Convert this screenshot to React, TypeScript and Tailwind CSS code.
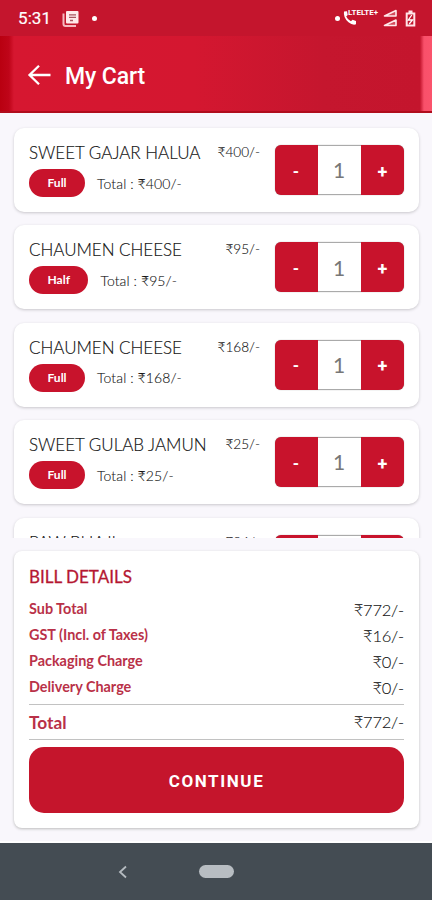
import React from "react";

type Item = { name: string; size: string; price: string };

const items: Item[] = [
  { name: "SWEET GAJAR HALUA", size: "Full", price: "₹400/-" },
  { name: "CHAUMEN CHEESE", size: "Half", price: "₹95/-" },
  { name: "CHAUMEN CHEESE", size: "Full", price: "₹168/-" },
  { name: "SWEET GULAB JAMUN", size: "Full", price: "₹25/-" },
  { name: "PAW BHAJI", size: "Full", price: "₹84/-" },
];

const charges = [
  ["Sub Total", "₹772/-"],
  ["GST (Incl. of Taxes)", "₹16/-"],
  ["Packaging Charge", "₹0/-"],
  ["Delivery Charge", "₹0/-"],
];

function StatusBar() {
  return (
    <div className="flex h-9 items-center bg-[#c4152d] pl-[18px] pr-[16px] text-white">
      <span className="font-[Roboto] text-[17px] leading-none tracking-[0.1px] [-webkit-text-stroke:0.2px_white]">5:31</span>
      <svg className="ml-[11px] mt-px" width="18" height="18" viewBox="0 0 18 18">
        <path d="M5 1h10.500A1 1 0 0 1 16.500 2v10.500a1 1 0 0 1-1 1H5a1 1 0 0 1-1-1V2a1 1 0 0 1 1-1Z" fill="#ffe9ea" />
        <path d="M1.500 3.500V14a2 2 0 0 0 2 2H14" fill="none" stroke="#f5b9c0" strokeWidth="2" />
        <path d="M7 4.800h7M7 7.300h7M8 10.500h3" stroke="#a95560" strokeWidth="1.300" />
      </svg>
      <span className="ml-[12px] size-[5px] rounded-full bg-white" />
      <span className="ml-auto size-[5px] rounded-full bg-white" />
      <svg className="ml-[3px]" width="14" height="16" viewBox="0 0 14 16">
        <path d="M1 1.500 4 1.200 4.700 5 3.200 6.600Q4.800 10 7.900 11.300L9.600 9.700 13 11V14.300Q9.500 15.500 5.500 12.300 0 7.500 1 1.500Z" fill="white" />
      </svg>
      <span className="-ml-[9px] mb-[10px] w-[31px] whitespace-nowrap font-[Roboto] text-[8px] font-bold leading-none">LTELTE+</span>
      <svg className="ml-[4px]" width="15" height="18" viewBox="0 0 15 18">
        <path d="M13 1.500v5.500H1.500ZM13 11v5.500H1.500Z" fill="#d64a5c" stroke="#ffe9eb" strokeWidth="1.600" strokeLinejoin="round" />
      </svg>
      <svg className="ml-[7px]" width="11" height="17" viewBox="0 0 11 17">
        <path d="M3.500 1.500h4M1.700 3.500h7.600v12H1.700Z" fill="none" stroke="#ffe4e7" strokeWidth="2" />
        <path d="m6.800 5-3.500 5h4.200l-3.300 4" fill="none" stroke="white" strokeWidth="1.300" />
      </svg>
    </div>
  );
}

function Header() {
  return (
    <header className="flex h-[77px] items-center border-b-2 border-[#b00d1d] bg-[linear-gradient(90deg,#b90010_0px,#bf0519_9px,#d61730_14px,#d41730_45%,#c5162e_75%,#c4152d_420px,#f9506a_424px,#fb536c_100%)] pl-[27px] pt-[2px] text-white">
      <svg width="25" height="24" viewBox="0 0 25 24" fill="none" stroke="white" strokeWidth="2.300">
        <path d="M23.500 12H2.500M12 2.700 2.500 12l9.500 9.300" />
      </svg>
      <h1 className="ml-[13px] pt-[3px] font-[Roboto] text-[23px] font-medium leading-none tracking-[-0.1px]">My Cart</h1>
    </header>
  );
}

function Stepper() {
  return (
    <div className="mt-[17px] flex h-[50px] w-[129px] shrink-0 overflow-hidden rounded-[6px] bg-[#c8132c] font-[Roboto] shadow-[0_0_1px_#888]">
      <button className="flex w-[43px] items-center justify-center pr-px pt-[3px] text-[16px] font-bold text-white">-</button>
      <span className="flex w-[43px] items-center justify-center border-y border-[#aaa] bg-white pr-px font-[Lato] text-[21px] text-[#777]">1</span>
      <button className="flex w-[43px] items-center justify-center pt-[2px] text-[18px] font-bold text-white">+</button>
    </div>
  );
}

function CartCard({ item }: { item: Item }) {
  return (
    <article className="mb-[13.400px] flex h-[84px] shrink-0 rounded-[10px] bg-white px-[15px] shadow-[0_1px_3px_#c8c6cb]">
      <div className="w-[231px] shrink-0 pt-[13px]">
        <div className="flex h-[24px] justify-between whitespace-nowrap">
          <h2 className="font-[Lato] text-[17px] font-light leading-[24px] text-[#111] tracking-[-0.03px] [-webkit-text-stroke:0.15px_#111]">{item.name}</h2>
          <span className="font-[Lato] text-[13.600px] font-light leading-[22px] text-[#111] [-webkit-text-stroke:0.1px_#111]">{item.price}</span>
        </div>
        <div className="mt-[4px] flex items-center font-[Lato]">
          <span className="flex h-[28px] items-center rounded-full bg-[#c8132c] px-[18.500px] text-[12px] font-bold text-white">{item.size}</span>
          <span className="ml-[12px] text-[14px] font-light tracking-[0.100px] text-[#111] [-webkit-text-stroke:0.1px_#111]">Total : {item.price}</span>
        </div>
      </div>
      <div className="ml-[15px]"><Stepper /></div>
    </article>
  );
}

function Bill() {
  return (
    <section className="h-[277px] rounded-[8px] bg-white px-[15px] pt-[15px] font-[Lato] shadow-[0_1px_3px_#bbb]">
      <h2 className="text-[17px] leading-[22px] text-[#b51732] [-webkit-text-stroke:0.3px_#b51732]">BILL DETAILS</h2>
      <div className="mt-[7px]">
        {charges.map(([label, value]) => (
          <div key={label} className="flex h-[26px] items-center justify-between">
            <span className="pt-[2px] text-[14.400px] font-bold text-[#b93148]">{label}</span>
            <span className="pt-[4px] text-[16.500px] font-light tracking-[-0.2px] text-[#111] [-webkit-text-stroke:0.1px_#111]">{value}</span>
          </div>
        ))}
      </div>
      <div className="mt-[5px] flex h-[36px] items-center justify-between border-y border-[#c2c2c2]">
        <span className="pt-px text-[17.300px] font-bold text-[#b93148]">Total</span>
        <span className="pt-px text-[16.500px] font-light tracking-[-0.2px] text-[#111] [-webkit-text-stroke:0.1px_#111]">{charges[0][1]}</span>
      </div>
      <button className="mt-[7px] flex h-[66px] w-full items-center justify-center rounded-[15px] bg-[#c5152c] pt-[3px] font-[Roboto] text-[17px] font-bold tracking-[1.600px] text-white">CONTINUE</button>
    </section>
  );
}

export default function App() {
  return (
    <div className="flex h-[900px] w-[432px] flex-col overflow-hidden bg-[#f9f7fc]">
      <StatusBar />
      <Header />
      <main className="flex h-[730px] flex-col border-b-2 border-white">
        <div className="flex h-[425px] shrink-0 flex-col overflow-hidden pl-[14px] pr-[13px] pt-[15px]">
          {items.map((item, index) => <CartCard key={index} item={item} />)}
        </div>
        <div className="pl-[14px] pr-[13px] pt-[13px]"><Bill /></div>
      </main>
      <nav className="flex h-[57px] items-center bg-[#444c53]">
        <svg className="ml-[117px]" width="12" height="16" viewBox="0 0 12 16" fill="none" stroke="#b5bbc0" strokeWidth="1.800"><path d="m9 2.500-6 5.500 6 5.500" /></svg>
        <span className="ml-[70px] h-[13px] w-[35px] rounded-full bg-[#b8bdc2]" />
      </nav>
    </div>
  );
}
